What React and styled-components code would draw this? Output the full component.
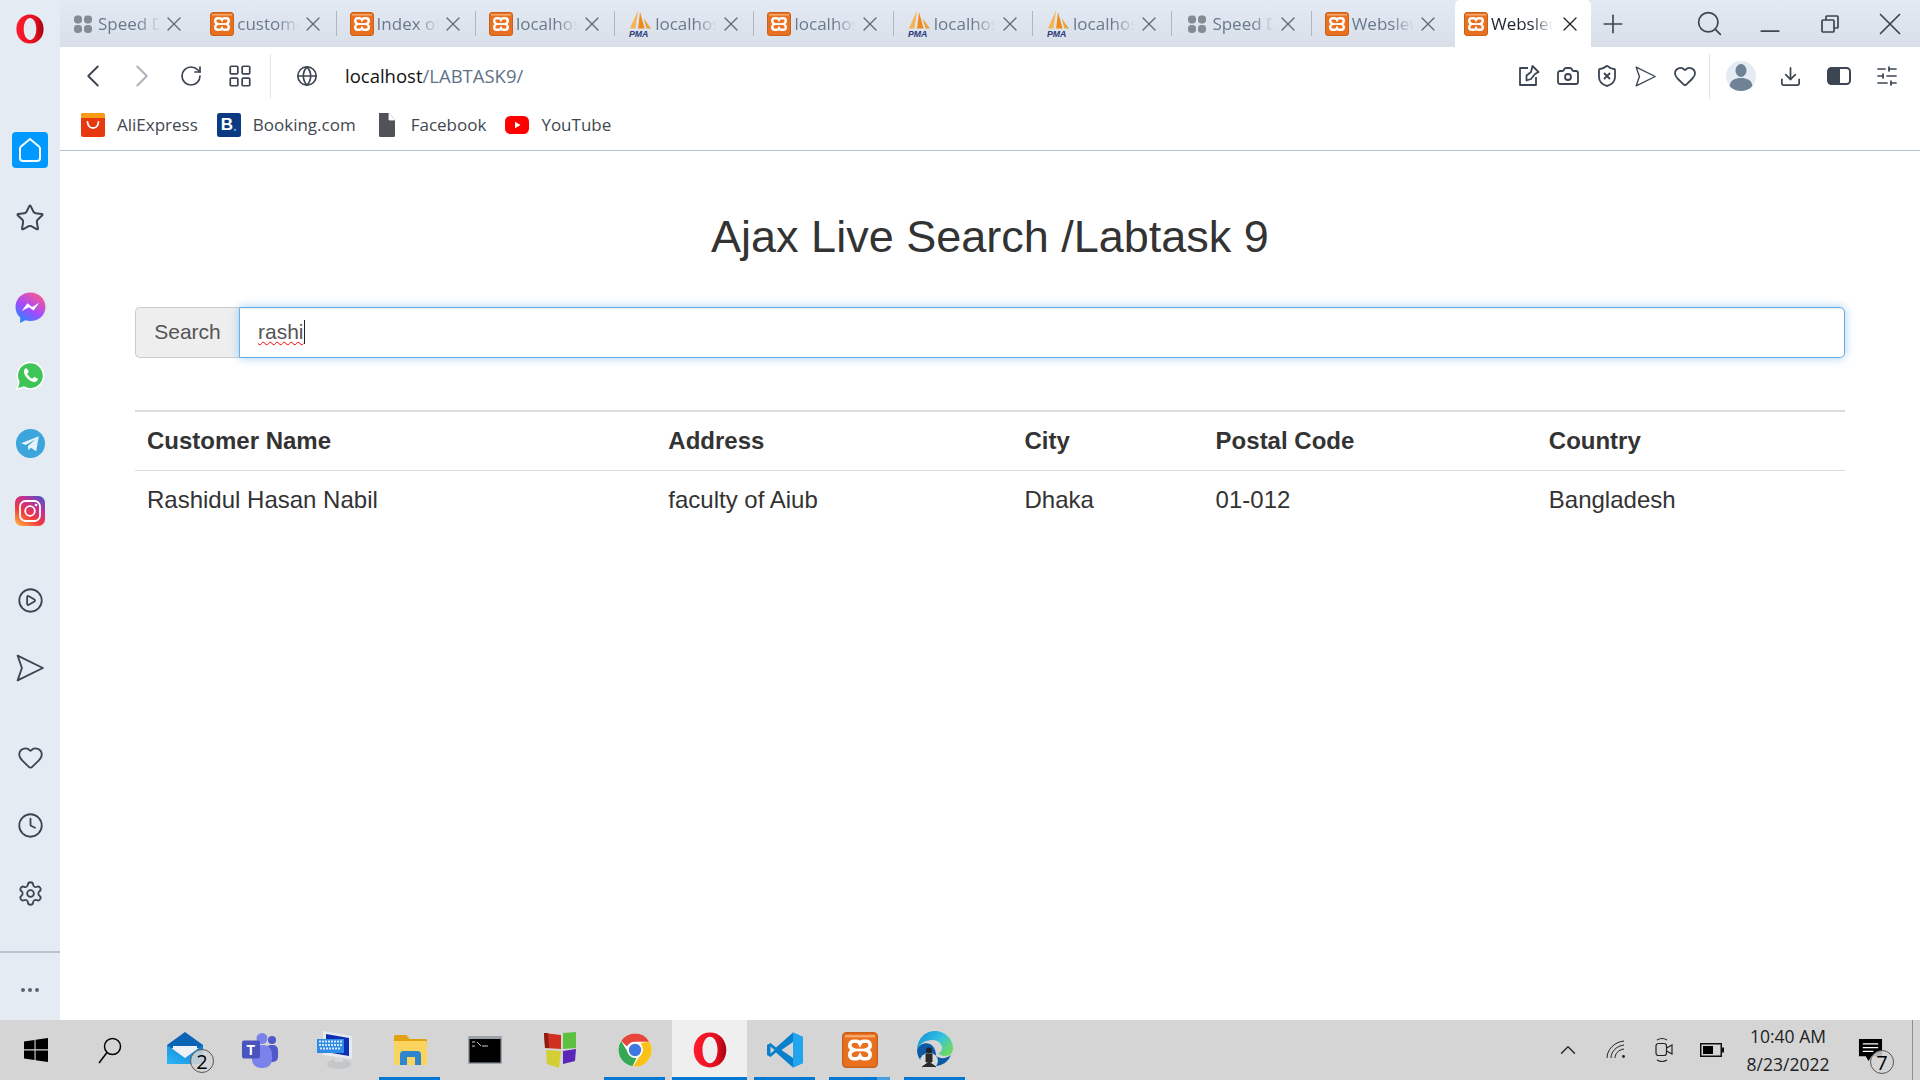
import React from 'react';
import styled, { createGlobalStyle } from 'styled-components';
import {
  ChevronLeft,
  ChevronRight,
  RotateCw,
  LayoutGrid,
  Globe,
  Camera,
  ShieldX,
  Heart,
  Download,
  SlidersHorizontal,
  X,
  Plus,
  Search as SearchIcon,
  Minus,
  Star,
  CirclePlay,
  Clock,
  Settings,
  Ellipsis,
  ChevronUp,
} from 'lucide-react';

const GlobalStyle = createGlobalStyle`
  html, body {
    margin: 0;
    padding: 0;
    background: #fff;
    overflow: hidden;
  }
  * {
    box-sizing: border-box;
  }
`;

const INK = '#3b4652';

const tabs = [
  { id: 1, icon: 'speed', title: 'Speed Dial' },
  { id: 2, icon: 'xampp', title: 'customers' },
  { id: 3, icon: 'xampp', title: 'Index of /' },
  { id: 4, icon: 'xampp', title: 'localhost/' },
  { id: 5, icon: 'pma', title: 'localhost/' },
  { id: 6, icon: 'xampp', title: 'localhost/' },
  { id: 7, icon: 'pma', title: 'localhost/' },
  { id: 8, icon: 'pma', title: 'localhost/' },
  { id: 9, icon: 'speed', title: 'Speed Dial' },
  { id: 10, icon: 'xampp', title: 'Websleuth' },
  { id: 11, icon: 'xampp', title: 'Websleuth', active: true },
];

const customers = [
  {
    name: 'Rashidul Hasan Nabil',
    address: 'faculty of Aiub',
    city: 'Dhaka',
    postal: '01-012',
    country: 'Bangladesh',
  },
];

/* ---------- drawn icons ---------- */

const XamppIcon = ({ size = 24 }) => (
  <svg width={size} height={size} viewBox="0 0 24 24">
    <rect x="0.500" y="0.500" width="23" height="23" rx="2.500" fill="#e8701f" stroke="#c9601c" strokeWidth="1" />
    <rect x="2" y="2" width="20" height="1.600" fill="#f6a56b" />
    <path
      d="M7.600 6.200h2c1.300 0 2 .8 2.400 1.600.4-.8 1.100-1.600 2.400-1.600h2c1.600 0 2.400 1.300 2.400 2.800 0 1.500-1.100 2.400-2.600 3 1.500.6 2.600 1.500 2.600 3 0 1.500-.8 2.800-2.400 2.800h-2c-1.300 0-2-.8-2.400-1.600-.4.8-1.100 1.600-2.400 1.600h-2c-1.600 0-2.400-1.300-2.400-2.800 0-1.500 1.100-2.400 2.600-3-1.500-.6-2.600-1.500-2.600-3C5.200 7.500 6 6.200 7.600 6.200z"
      fill="none"
      stroke="#fff"
      strokeWidth="2.400"
    />
    <path d="M8 12h8" stroke="#fff" strokeWidth="1.800" />
  </svg>
);

const PmaIcon = () => (
  <svg width="26" height="30" viewBox="0 0 26 30">
    <path d="M11 0 L8 20 H2 Z" fill="#f5b455" />
    <path d="M13 2 L11 20 H18 Z" fill="#f08a1d" />
    <path d="M17 9 L20 20 H25 Z" fill="#e8a33c" />
    <text x="1" y="29" fontFamily="Liberation Sans, sans-serif" fontSize="9.500" fontWeight="700" fontStyle="italic" fill="#2a3a7a">
      PMA
    </text>
  </svg>
);

const SpeedDialIcon = () => (
  <svg width="24" height="24" viewBox="0 0 24 24" fill="#858b92">
    <rect x="3" y="3.500" width="8" height="8" rx="3.400" />
    <rect x="13" y="3.500" width="8" height="8" rx="3.400" />
    <rect x="3" y="13" width="8" height="8" rx="3.400" />
    <rect x="13" y="13" width="8" height="8" rx="3.400" />
  </svg>
);

const OperaLogo = ({ size = 30, id = 'operaRed' }) => (
  <svg width={size} height={size} viewBox="0 0 32 32">
    <defs>
      <linearGradient id={id} x1="0" y1="0" x2="1" y2="0">
        <stop offset="0" stopColor="#ff1b2d" />
        <stop offset="0.700" stopColor="#e0101f" />
        <stop offset="1" stopColor="#a70014" />
      </linearGradient>
    </defs>
    <path
      fillRule="evenodd"
      d="M16 .5C7.300.500 1.500 7.400 1.500 16S7.300 31.500 16 31.500 30.500 24.600 30.500 16 24.700.500 16 .500zm0 3.800c4 0 6.700 5.400 6.700 11.700S20 27.700 16 27.700 9.300 22.300 9.300 16 12 4.300 16 4.300z"
      fill={`url(#${id})`}
    />
  </svg>
);

const HomeGlyph = () => (
  <svg width="24" height="26" viewBox="0 0 24 26" fill="none" stroke="#fff" strokeWidth="2" strokeLinejoin="round">
    <path d="M12 2 L21 9.500 Q22 10.500 22 12 V21 Q22 24 19 24 H5 Q2 24 2 21 V12 Q2 10.500 3 9.500 Z" />
  </svg>
);

const SendGlyph = ({ size = 28, stroke = INK }) => (
  <svg width={size} height={size} viewBox="0 0 26 26" fill="none" stroke={stroke} strokeWidth="1.700" strokeLinejoin="round">
    <path d="M1.500 1.500 L25 13 L1.500 24.500 L5.500 13 Z" />
  </svg>
);

const Messenger = () => (
  <svg width="31" height="31" viewBox="0 0 30 30">
    <defs>
      <linearGradient id="msgGrad" x1="0.200" y1="1" x2="0.800" y2="0">
        <stop offset="0" stopColor="#1e8bff" />
        <stop offset="0.450" stopColor="#a24bff" />
        <stop offset="1" stopColor="#ff5c87" />
      </linearGradient>
    </defs>
    <path d="M15 0.500C6.800.500.500 6.500.500 14.400c0 4.100 1.700 7.700 4.500 10.200V30l4.900-2.700c1.600.5 3.300.7 5.100.7 8.200 0 14.500-6 14.500-13.600S23.200.500 15 .500z" fill="url(#msgGrad)" />
    <path d="M6.500 18.500 L12 11 L16.500 14.500 L23.500 10.500 L18 18 L13.500 14.700 Z" fill="#fff" />
  </svg>
);

const Whatsapp = () => (
  <svg width="31" height="31" viewBox="0 0 30 30">
    <path d="M1 29 L3 21.500 A13.500 13.500 0 1 1 8.500 27 Z" fill="#fff" />
    <path d="M3 27 L4.500 21.200 A12 12 0 1 1 8.800 25.500 Z" fill="#3ec457" />
    <path d="M10.500 8c-1 .4-2 1.700-1.800 3.500.3 2.800 2.300 5.600 4.500 7.400 2 1.600 4.400 2.600 6.200 2.300 1.500-.3 2.700-1.500 2.800-2.800 0-.4-3-2.100-3.500-2-.6.100-1.200 1.600-1.800 1.600-1.500-.3-4.500-3-5-4.800-.1-.5 1.300-1.300 1.300-1.900 0-.6-1.300-3.300-2.700-3.300z" fill="#fff" />
  </svg>
);

const Telegram = () => (
  <svg width="29" height="29" viewBox="0 0 28 28">
    <circle cx="14" cy="14" r="14" fill="#3ba5dc" />
    <path d="M5 13.800 L22 7 L19.500 21.500 L14.500 18 L12 20.500 L11.500 16.500 L19 9.800 L9.500 15.500 Z" fill="#e6f3fa" />
  </svg>
);

const Instagram = () => (
  <svg width="30" height="30" viewBox="0 0 30 30">
    <defs>
      <linearGradient id="igGrad" x1="0.100" y1="1" x2="0.800" y2="0">
        <stop offset="0" stopColor="#fdb03d" />
        <stop offset="0.400" stopColor="#f0373f" />
        <stop offset="0.700" stopColor="#c5308f" />
        <stop offset="1" stopColor="#5b4fc4" />
      </linearGradient>
    </defs>
    <rect width="30" height="30" rx="6.500" fill="url(#igGrad)" />
    <rect x="5" y="5" width="20" height="20" rx="5.500" fill="none" stroke="#fff" strokeWidth="1.800" />
    <circle cx="15" cy="15" r="4.800" fill="none" stroke="#fff" strokeWidth="1.800" />
    <circle cx="21" cy="9" r="1.300" fill="#fff" />
  </svg>
);

const AliExpress = () => (
  <svg width="24" height="24" viewBox="0 0 24 24">
    <rect width="24" height="24" rx="2.500" fill="#e8380f" />
    <path d="M0 2.500A2.500 2.500 0 0 1 2.500 0h19A2.500 2.500 0 0 1 24 2.500V5H0z" fill="#f79a14" />
    <path d="M6.500 9c.5 4 2.500 6 5.500 6s5-2 5.500-6" fill="none" stroke="#fff" strokeWidth="1.800" strokeLinecap="round" />
  </svg>
);

const BookingMark = styled.span`
  display: flex;
  align-items: center;
  justify-content: center;
  width: 24px;
  height: 24px;
  border-radius: 2.500px;
  background: #0b3a82;
  color: #fff;
  font: 700 17px 'Liberation Sans', sans-serif;
  i {
    font-style: normal;
    color: #4ea6e6;
    font-size: 14px;
    margin-top: 3px;
  }
`;

const DocIcon = () => (
  <svg width="24" height="24" viewBox="0 0 24 24">
    <path d="M4 0h10l6 7v15.500a1.500 1.500 0 0 1-1.500 1.500h-13A1.500 1.500 0 0 1 4 22.500z" fill="#4f5357" />
    <path d="M14 0v7h6" fill="#fff" stroke="#fff" strokeWidth="0.800" />
  </svg>
);

const YouTubeIcon = () => (
  <svg width="24" height="24" viewBox="0 0 24 24">
    <rect y="3" width="24" height="18" rx="5.500" fill="#f00" />
    <path d="M10 8.800 L15.500 12 L10 15.200 Z" fill="#fff" />
  </svg>
);

const PinIcon = () => (
  <svg width="24" height="24" viewBox="0 0 24 24" fill="none" stroke={INK} strokeWidth="1.800" strokeLinejoin="round">
    <path d="M11 4 H3 V21 H19 V13" />
    <path d="M15.500 2 L21.500 8 L18 10 L14 15 L9.500 16.500 L9.500 11.500 L14 8 Z" />
  </svg>
);

const Avatar = () => (
  <svg width="30" height="30" viewBox="0 0 30 30">
    <circle cx="15" cy="15" r="15" fill="#e4ebf3" />
    <ellipse cx="15" cy="9.500" rx="5.500" ry="6.500" fill="#6f8296" />
    <path d="M3.500 25c1-6 5.500-8 11.500-8s10.500 2 11.500 8c-3 3.500-7 5-11.500 5s-8.500-1.500-11.500-5z" fill="#6f8296" />
  </svg>
);

const ToggleIcon = () => (
  <svg width="24" height="20" viewBox="0 0 24 20">
    <rect x="1" y="2" width="22" height="16" rx="3.500" fill="#fff" stroke={INK} strokeWidth="2" />
    <path d="M4.500 2H13V18H4.500A3.500 3.500 0 0 1 1 14.500v-9A3.500 3.500 0 0 1 4.500 2z" fill={INK} />
  </svg>
);

const RestoreIcon = () => (
  <svg width="18" height="18" viewBox="0 0 18 18" fill="none" stroke={INK} strokeWidth="1.700">
    <rect x="1" y="5" width="12" height="12" rx="1" />
    <path d="M5 5V1.800A.8.8 0 0 1 5.800 1H16.200a.8.8 0 0 1 .8.800V12a1 1 0 0 1-1 1h-3" />
  </svg>
);

const WindowsLogo = () => (
  <svg width="24" height="24" viewBox="0 0 24 24" fill="#000">
    <path d="M0 3.400 L10.500 2 V11.300 H0 Z" />
    <path d="M11.600 1.800 L24 0 V11.300 H11.600 Z" />
    <path d="M0 12.500 H10.500 V22 L0 20.600 Z" />
    <path d="M11.600 12.500 H24 V24 L11.600 22.200 Z" />
  </svg>
);

const TaskSearch = () => (
  <svg width="26" height="28" viewBox="0 0 26 28" fill="none" stroke="#000" strokeWidth="1.500">
    <circle cx="15.500" cy="10.500" r="8" />
    <path d="M10 16.500 L2 27" />
  </svg>
);

const MailIcon = () => (
  <svg width="36" height="36" viewBox="0 0 36 36">
    <defs>
      <linearGradient id="mailFront" x1="0" y1="1" x2="1" y2="0">
        <stop offset="0" stopColor="#2cb7f2" />
        <stop offset="1" stopColor="#0a78d4" />
      </linearGradient>
    </defs>
    <path d="M0 13 L18 0 L36 13 V16 H0 Z" fill="#0b63b5" />
    <path d="M6 14 H30 V22 L18 29 L6 22 Z" fill="#eef2f6" />
    <path d="M0 13 L18 26 L36 13 V32 H0 Z" fill="url(#mailFront)" />
  </svg>
);

const TeamsIcon = () => (
  <svg width="36" height="36" viewBox="0 0 36 36">
    <circle cx="30" cy="8" r="4" fill="#5059c9" />
    <rect x="24" y="13" width="12" height="17" rx="5" fill="#5059c9" />
    <circle cx="20" cy="6.500" r="5.500" fill="#7b83eb" />
    <rect x="10" y="13" width="20" height="23" rx="8.500" fill="#7b83eb" />
    <rect x="0" y="8.500" width="18" height="18" rx="2" fill="#4b53bc" />
    <text x="4.500" y="23" fontFamily="Liberation Sans, sans-serif" fontSize="14" fontWeight="700" fill="#fff">T</text>
  </svg>
);

const RemoteIcon = () => (
  <svg width="36" height="38" viewBox="0 0 36 38">
    <ellipse cx="22" cy="33" rx="12" ry="5" fill="#c4c7c9" />
    <rect x="18" y="26" width="8" height="5" fill="#d8d8d8" />
    <path d="M6 0 L35 5 V28 L6 24 Z" fill="#e6e9ee" />
    <path d="M9 3 L32 7 V25 L9 21 Z" fill="#0c2fb4" />
    <path d="M0 8 H27 V22 H0 Z" fill="#2d8be6" />
    <path d="M2 10.500 H25 M2 14 H25 M3 17.500 H24" stroke="#d3e9fb" strokeWidth="2" strokeDasharray="2 1" />
  </svg>
);

const FolderIcon = () => (
  <svg width="34" height="34" viewBox="0 0 34 34">
    <path d="M1 3.500A1.500 1.500 0 0 1 2.500 2h11l3 4H32.500A1.500 1.500 0 0 1 34 7.500V12H1z" fill="#e2a210" />
    <path d="M1 8 H32.500A1.500 1.500 0 0 1 34 9.500V30.500A1.500 1.500 0 0 1 32.500 32H2.500A1.500 1.500 0 0 1 1 30.500z" fill="#fbd35f" />
    <path d="M7 32 V21.500A3.500 3.500 0 0 1 10.500 18h14a3.500 3.500 0 0 1 3.500 3.500V32h-6V24h-8v8z" fill="#2f86cc" />
  </svg>
);

const CmdIcon = () => (
  <svg width="34" height="28" viewBox="0 0 34 28">
    <rect width="34" height="28" rx="1" fill="#9ba1a8" />
    <rect x="1.500" y="3" width="31" height="23.500" fill="#000" />
    <path d="M4 6h3M4 10h3M9 6l4 4M14 10h6" stroke="#c9c9c9" strokeWidth="1" />
  </svg>
);

const CodeBlocksIcon = () => (
  <svg width="34" height="36" viewBox="0 0 34 36">
    <path d="M1 1 L18 3 V17 L2 16 Z" fill="#d0301f" />
    <path d="M20 1 L33 0 V16 L20 17 Z" fill="#5cc13f" />
    <path d="M3 18 L18 19 L16 36 L4 32 Z" fill="#d2ce34" />
    <path d="M20 19 L33 17 L32 29 L20 32 Z" fill="#5a26b8" />
    <path d="M1 1 L5 1 L6 16 L2 16 Z" fill="#8e1d12" />
  </svg>
);

const ChromeIcon = () => (
  <svg width="34" height="34" viewBox="0 0 34 34">
    <circle cx="17" cy="17" r="16.500" fill="#fff" />
    <path d="M17 .5A16.500 16.500 0 0 1 31.300 8.750L17 8.750Q11.500 8.750 9 13.500L3.200 8A16.500 16.500 0 0 1 17 .5z" fill="#e8453c" />
    <path d="M3.200 8L10 19.500Q12.500 25 18.500 25L14.500 33.300A16.500 16.500 0 0 1 3.200 8z" fill="#34a853" />
    <path d="M31.300 8.750A16.500 16.500 0 0 1 15 33.400L23.800 20Q26 15 22.500 10z" fill="#fbc116" />
    <circle cx="17" cy="17" r="7.800" fill="#fff" />
    <circle cx="17" cy="17" r="6.200" fill="#3f78e0" />
  </svg>
);

const VsCodeIcon = () => (
  <svg width="36" height="36" viewBox="0 0 36 36">
    <path d="M26 0.500 L36 5 V31 L26 35.500 L9 20.500 L3.500 25 L0 23 V13 L3.500 11 L9 15.500Z" fill="#0a7fcb" />
    <path d="M26 0.500 L36 5 V31 L26 35.500 Z" fill="#22a5ef" />
    <path d="M26 10 V26 L14.500 18 Z" fill="#d5d5d5" />
    <path d="M3.500 14.500 V21.500 L7.500 18 Z" fill="#d5d5d5" />
  </svg>
);

const EdgeIcon = () => (
  <svg width="36" height="38" viewBox="0 0 36 38">
    <defs>
      <linearGradient id="edgeTop" x1="0" y1="0" x2="1" y2="0.600">
        <stop offset="0" stopColor="#0c8bd3" />
        <stop offset="0.600" stopColor="#35c1e0" />
        <stop offset="1" stopColor="#6bd86a" />
      </linearGradient>
    </defs>
    <path d="M0 19C0 7 9 0 18 0c10 0 18 8 18 17 0 5-3 8-8 8-4 0-6-2-6-3 2-1 3-3 3-5 0-4-4-8-9-8C8 9 2 13 0 19z" fill="url(#edgeTop)" />
    <path d="M0 19C2 13 8 11 13 13c4 2 6 7 6 12 4 3 10 3 15-1-3 7-9 11-16 11C8 35 0 29 0 19z" fill="#0c59a4" />
    <ellipse cx="12" cy="30" rx="9" ry="8" fill="#d9dadb" />
    <circle cx="12" cy="19.500" r="3" fill="#222" />
    <path d="M9 23h6v8H9zM5 36l7-5 7 5" fill="#2a2a2a" stroke="#2a2a2a" strokeWidth="1" />
  </svg>
);

const WifiIcon = () => (
  <svg width="20" height="20" viewBox="0 0 20 20" fill="none" stroke="#222" strokeWidth="1">
    <path d="M1 18C1 10 8 2 18 1" />
    <path d="M5 18C5 12 10 6 18 5" />
    <path d="M9 18C9 14 12 10 18 9" />
    <circle cx="17.500" cy="16.500" r="1.400" fill="#222" stroke="none" />
  </svg>
);

const MeetIcon = () => (
  <svg width="18" height="26" viewBox="0 0 18 26" fill="none" stroke="#222" strokeWidth="1.200">
    <rect x="1" y="6.500" width="10.500" height="12" rx="2.500" />
    <path d="M11.500 11 L17 8 V17 L11.500 14" />
    <path d="M2 3 Q7 0 12 3" />
    <path d="M2 23 Q7 26 12 23" />
  </svg>
);

const BatteryIcon = () => (
  <svg width="24" height="14" viewBox="0 0 24 14">
    <rect x="0.750" y="0.750" width="20.500" height="12.500" fill="none" stroke="#111" strokeWidth="1.500" />
    <rect x="3" y="3" width="10" height="8" fill="#000" />
    <rect x="22" y="4.500" width="2" height="5" fill="#111" />
  </svg>
);

const NoteIcon = () => (
  <svg width="25" height="25" viewBox="0 0 26 26">
    <path d="M1 1 H25 V19 H14 L11 24 L8 19 H1 Z" fill="#000" />
    <path d="M5 6 H21 M5 10 H21 M5 14 H16" stroke="#fff" strokeWidth="1.300" />
  </svg>
);

/* ---------- window frame ---------- */

const Screen = styled.div`
  display: flex;
  flex-direction: column;
  width: 1920px;
  height: 1080px;
  font-family: 'Liberation Sans', Arial, sans-serif;
`;

const Main = styled.div`
  display: flex;
  flex: 1;
  min-height: 0;
`;

const Sidebar = styled.aside`
  display: flex;
  flex-direction: column;
  width: 60px;
  flex-shrink: 0;
  background: #e4ebf3;
`;

const SideLogo = styled.div`
  display: flex;
  justify-content: center;
  height: 116px;
  padding-top: 14px;
`;

const SideGroup = styled.div`
  display: flex;
  flex-direction: column;
  margin-bottom: 21px;
`;

const SideItem = styled.div`
  display: flex;
  align-items: center;
  justify-content: center;
  height: 68px;
  color: ${INK};
`;

const HomeTile = styled.div`
  display: flex;
  align-items: center;
  justify-content: center;
  width: 36px;
  height: 36px;
  border-radius: 4px;
  background: #0099ff;
`;

const SideFooter = styled.div`
  display: flex;
  align-items: center;
  justify-content: center;
  flex: 1;
  margin-top: 3px;
  padding-top: 7px;
  border-top: 2px solid #b5c2cf;
  color: #5a6570;
`;

const Browser = styled.div`
  display: flex;
  flex-direction: column;
  flex: 1;
  min-width: 0;
  background: #fff;
`;

/* tab strip */

const TabStrip = styled.div`
  display: flex;
  align-items: stretch;
  height: 47px;
  padding-left: 2px;
  background: linear-gradient(#e3eaf3, #d8dfe8);
  color: ${INK};
`;

const Tab = styled.div`
  position: relative;
  display: flex;
  align-items: center;
  flex-shrink: 0;
  width: ${(p) => (p.$active ? '136px' : '135.300px')};
  margin-right: ${(p) => (p.$active ? '0' : '4px')};
  padding-left: 9px;
  border-radius: 5px 5px 0 0;
  background: ${(p) => (p.$active ? '#fff' : 'transparent')};
  &::after {
    content: '';
    display: ${(p) => (p.$divider ? 'block' : 'none')};
    position: absolute;
    right: 0;
    top: 11px;
    height: 25px;
    border-right: 1px solid #aeb8c3;
  }
`;

const TabIconSlot = styled.span`
  display: flex;
  align-items: center;
  justify-content: center;
  width: 24px;
  height: 30px;
  margin-right: 3px;
  flex-shrink: 0;
`;

const TabTitle = styled.span`
  width: 62px;
  flex-shrink: 0;
  overflow: hidden;
  white-space: nowrap;
  font: 17px 'Open Sans', sans-serif;
  color: ${(p) => (p.$active ? '#1c2630' : '#6a7a8c')};
  -webkit-mask-image: linear-gradient(to right, #000 65%, transparent 100%);
  mask-image: linear-gradient(to right, #000 65%, transparent 100%);
`;

const TabClose = styled.span`
  display: flex;
  margin-left: ${(p) => (p.$active ? '5px' : '2px')};
  color: ${(p) => (p.$active ? '#222' : '#5d6975')};
`;

const StripButton = styled.span`
  display: flex;
  align-items: center;
  justify-content: center;
  width: ${(p) => p.$w}px;
  flex-shrink: 0;
`;

/* toolbar */

const Toolbar = styled.div`
  display: flex;
  align-items: center;
  height: 58px;
  padding-left: 8px;
  color: ${INK};
`;

const NavButton = styled.span`
  display: flex;
  align-items: center;
  justify-content: center;
  width: ${(p) => p.$w || 49}px;
  flex-shrink: 0;
  color: ${(p) => (p.$off ? '#aab2ba' : INK)};
`;

const ToolDivider = styled.span`
  width: 1px;
  height: 45px;
  flex-shrink: 0;
  margin: 0 ${(p) => p.$right || 0}px 0 ${(p) => p.$left || 0}px;
  background: #e2e6ea;
`;

const AddressText = styled.div`
  flex: 1;
  margin: 0 0 2px 27px;
  font: 18.500px 'Open Sans', sans-serif;
  color: #111;
  span {
    color: #5f7286;
  }
`;

const ToolRight = styled.div`
  display: flex;
  align-items: center;
`;

/* bookmarks */

const BookmarkBar = styled.div`
  display: flex;
  align-items: center;
  gap: 19px;
  height: 46px;
  padding: 0 0 6px 21px;
  border-bottom: 1px solid #b9c3cd;
`;

const Bookmark = styled.div`
  display: flex;
  align-items: center;
  gap: 12px;
  font: 17px 'Open Sans', sans-serif;
  color: #3f4850;
`;

/* ---------- page ---------- */

const Page = styled.main`
  flex: 1;
  padding: 0 75px;
  color: #333;
`;

const Title = styled.h2`
  margin: 61px 0 0;
  height: 50px;
  line-height: 50px;
  text-align: center;
  font-size: 45px;
  font-weight: 400;
`;

const SearchGroup = styled.div`
  display: flex;
  height: 51px;
  margin-top: 45px;
  font-size: 21px;
`;

const SearchAddon = styled.div`
  display: flex;
  align-items: center;
  justify-content: center;
  width: 104px;
  flex-shrink: 0;
  padding-bottom: 1px;
  background: #eee;
  border: 1px solid #ccc;
  border-right: 0;
  border-radius: 5px 0 0 5px;
  color: #555;
`;

const SearchInput = styled.div`
  display: flex;
  align-items: center;
  flex: 1;
  padding: 0 0 1px 18px;
  background: #fff;
  border: 1.500px solid #66afe9;
  border-radius: 0 5px 5px 0;
  box-shadow: inset 0 1px 1px rgba(0, 0, 0, 0.075), 0 0 10px rgba(102, 175, 233, 0.6);
  color: #555;
`;

const Misspelled = styled.span`
  text-decoration: underline wavy #f00 1.200px;
  text-underline-offset: 2px;
`;

const Caret = styled.span`
  width: 1px;
  height: 24px;
  background: #222;
`;

const ResultTable = styled.table`
  width: 100%;
  margin-top: 52px;
  border-collapse: collapse;
  table-layout: fixed;
  font-size: 24px;
  color: #333;
`;

const Th = styled.th`
  width: ${(p) => p.$w}px;
  height: 59px;
  padding: 0 12px;
  text-align: left;
  font-weight: 700;
  border-top: 2px solid #ddd;
  border-bottom: 1px solid #ddd;
`;

const Td = styled.td`
  height: 60px;
  padding: 0 12px;
`;

/* ---------- taskbar ---------- */

const Taskbar = styled.footer`
  display: flex;
  align-items: stretch;
  height: 60px;
  flex-shrink: 0;
  background: #d5d5d5;
`;

const StartSlot = styled.div`
  display: flex;
  align-items: center;
  justify-content: center;
  width: ${(p) => p.$w}px;
  flex-shrink: 0;
`;

const AppSlot = styled.div`
  position: relative;
  display: flex;
  align-items: center;
  justify-content: center;
  width: 75px;
  flex-shrink: 0;
  background: ${(p) => (p.$active ? '#efefef' : 'transparent')};
  &::after {
    content: '';
    display: ${(p) => (p.$running ? 'block' : 'none')};
    position: absolute;
    bottom: 0;
    left: ${(p) => (p.$active ? '0' : '7px')};
    right: ${(p) => (p.$active ? '0' : '7px')};
    height: 3px;
    background: ${(p) =>
      p.$split ? 'linear-gradient(to right, #0078d4 79%, #4a9fe0 79%)' : '#0078d4'};
  }
`;

const CountBadge = styled.span`
  position: absolute;
  right: ${(p) => p.$right}px;
  bottom: ${(p) => p.$bottom}px;
  display: flex;
  align-items: center;
  justify-content: center;
  width: 24px;
  height: 24px;
  border: 1px solid #555;
  border-radius: 50%;
  background: rgba(213, 213, 213, 0.85);
  font: 20px 'Open Sans', sans-serif;
  color: #000;
`;

const Tray = styled.div`
  display: flex;
  align-items: center;
  margin-left: auto;
`;

const TraySlot = styled.div`
  display: flex;
  align-items: center;
  justify-content: center;
  width: 48px;
  height: 100%;
`;

const ClockText = styled.div`
  width: 104px;
  text-align: center;
  font: 17.500px/28px 'Open Sans', sans-serif;
  color: #222;
`;

const NoteSlot = styled.div`
  position: relative;
  display: flex;
  align-items: center;
  justify-content: center;
  width: 62px;
  height: 100%;
  margin-left: 4px;
  padding-right: 10px;
`;

const ShowDesktop = styled.div`
  align-self: stretch;
  width: 8px;
  margin-left: 6px;
  border-left: 1px solid #8d8d8d;
`;

const tabIcon = (kind) => {
  if (kind === 'speed') return <SpeedDialIcon />;
  if (kind === 'pma') return <PmaIcon />;
  return <XamppIcon />;
};

const App = () => {
  const columns = [
    { label: 'Customer Name', key: 'name', w: 521 },
    { label: 'Address', key: 'address', w: 356 },
    { label: 'City', key: 'city', w: 191 },
    { label: 'Postal Code', key: 'postal', w: 333 },
    { label: 'Country', key: 'country', w: 308 },
  ];

  return (
    <Screen>
      <GlobalStyle />
      <Main>
        <Sidebar>
          <SideLogo>
            <OperaLogo />
          </SideLogo>
          <SideGroup>
            <SideItem>
              <HomeTile>
                <HomeGlyph />
              </HomeTile>
            </SideItem>
            <SideItem>
              <Star size={30} strokeWidth={1.6} />
            </SideItem>
          </SideGroup>
          <SideGroup>
            <SideItem>
              <Messenger />
            </SideItem>
            <SideItem>
              <Whatsapp />
            </SideItem>
            <SideItem>
              <Telegram />
            </SideItem>
            <SideItem>
              <Instagram />
            </SideItem>
          </SideGroup>
          <SideGroup>
            <SideItem>
              <CirclePlay size={27} strokeWidth={1.6} />
            </SideItem>
            <SideItem>
              <SendGlyph />
            </SideItem>
          </SideGroup>
          <SideGroup>
            <SideItem>
              <Heart size={27} strokeWidth={1.6} />
            </SideItem>
            <SideItem>
              <Clock size={27} strokeWidth={1.6} />
            </SideItem>
            <SideItem>
              <Settings size={27} strokeWidth={1.6} />
            </SideItem>
          </SideGroup>
          <SideFooter>
            <Ellipsis size={24} />
          </SideFooter>
        </Sidebar>

        <Browser>
          <TabStrip>
            {tabs.map((t, i) => (
              <Tab key={t.id} $active={t.active} $divider={!t.active && i > 0 && i < tabs.length - 2}>
                <TabIconSlot>{tabIcon(t.icon)}</TabIconSlot>
                <TabTitle $active={t.active}>{t.title}</TabTitle>
                <TabClose $active={t.active}>
                  <X size={24} strokeWidth={1.3} />
                </TabClose>
              </Tab>
            ))}
            <StripButton $w={44}>
              <Plus size={30} strokeWidth={1.3} />
            </StripButton>
            <StripButton $w={40} />
            <StripButton $w={70}>
              <SearchIcon size={29} strokeWidth={1.4} />
            </StripButton>
            <StripButton $w={50}>
              <Minus size={30} strokeWidth={1.4} style={{ marginTop: 14 }} />
            </StripButton>
            <StripButton $w={70}>
              <RestoreIcon />
            </StripButton>
            <StripButton $w={50}>
              <X size={38} strokeWidth={1.1} />
            </StripButton>
          </TabStrip>

          <Toolbar>
            <NavButton>
              <ChevronLeft size={38} strokeWidth={1.2} />
            </NavButton>
            <NavButton $off>
              <ChevronRight size={38} strokeWidth={1.2} />
            </NavButton>
            <NavButton>
              <RotateCw size={24} strokeWidth={1.7} />
            </NavButton>
            <NavButton>
              <LayoutGrid size={26} strokeWidth={1.6} />
            </NavButton>
            <ToolDivider $left={6} $right={25} />
            <Globe size={22} strokeWidth={1.8} />
            <AddressText>
              localhost<span>/LABTASK9/</span>
            </AddressText>
            <ToolRight>
              <NavButton $w={39}>
                <PinIcon />
              </NavButton>
              <NavButton $w={39}>
                <Camera size={24} strokeWidth={1.8} />
              </NavButton>
              <NavButton $w={39}>
                <ShieldX size={24} strokeWidth={1.8} />
              </NavButton>
              <NavButton $w={39}>
                <SendGlyph size={21} />
              </NavButton>
              <NavButton $w={39}>
                <Heart size={24} strokeWidth={1.8} />
              </NavButton>
              <ToolDivider $left={5} $right={16} />
              <NavButton $w={30}>
                <Avatar />
              </NavButton>
              <NavButton $w={68}>
                <Download size={23} strokeWidth={1.8} />
              </NavButton>
              <NavButton $w={30}>
                <ToggleIcon />
              </NavButton>
              <NavButton $w={66}>
                <SlidersHorizontal size={24} strokeWidth={1.7} />
              </NavButton>
            </ToolRight>
          </Toolbar>

          <BookmarkBar>
            <Bookmark>
              <AliExpress />
              AliExpress
            </Bookmark>
            <Bookmark>
              <BookingMark>
                B<i>.</i>
              </BookingMark>
              Booking.com
            </Bookmark>
            <Bookmark>
              <DocIcon />
              Facebook
            </Bookmark>
            <Bookmark>
              <YouTubeIcon />
              YouTube
            </Bookmark>
          </BookmarkBar>

          <Page>
            <Title>Ajax Live Search /Labtask 9</Title>
            <SearchGroup>
              <SearchAddon>Search</SearchAddon>
              <SearchInput>
                <Misspelled>rashi</Misspelled>
                <Caret />
              </SearchInput>
            </SearchGroup>
            <ResultTable>
              <thead>
                <tr>
                  {columns.map((c) => (
                    <Th key={c.key} $w={c.w}>
                      {c.label}
                    </Th>
                  ))}
                </tr>
              </thead>
              <tbody>
                {customers.map((row) => (
                  <tr key={row.name}>
                    {columns.map((c) => (
                      <Td key={c.key}>{row[c.key]}</Td>
                    ))}
                  </tr>
                ))}
              </tbody>
            </ResultTable>
          </Page>
        </Browser>
      </Main>

      <Taskbar>
        <StartSlot $w={72}>
          <WindowsLogo />
        </StartSlot>
        <StartSlot $w={75}>
          <TaskSearch />
        </StartSlot>
        <AppSlot>
          <MailIcon />
          <CountBadge $right={8} $bottom={7}>
            2
          </CountBadge>
        </AppSlot>
        <AppSlot>
          <TeamsIcon />
        </AppSlot>
        <AppSlot>
          <RemoteIcon />
        </AppSlot>
        <AppSlot $running>
          <FolderIcon />
        </AppSlot>
        <AppSlot>
          <CmdIcon />
        </AppSlot>
        <AppSlot>
          <CodeBlocksIcon />
        </AppSlot>
        <AppSlot $running>
          <ChromeIcon />
        </AppSlot>
        <AppSlot $running $active>
          <OperaLogo size={36} id="operaRedTask" />
        </AppSlot>
        <AppSlot $running>
          <VsCodeIcon />
        </AppSlot>
        <AppSlot $running $split>
          <XamppIcon size={36} />
        </AppSlot>
        <AppSlot $running>
          <EdgeIcon />
        </AppSlot>
        <Tray>
          <TraySlot>
            <ChevronUp size={26} strokeWidth={1.2} color="#222" />
          </TraySlot>
          <TraySlot>
            <WifiIcon />
          </TraySlot>
          <TraySlot>
            <MeetIcon />
          </TraySlot>
          <TraySlot>
            <BatteryIcon />
          </TraySlot>
          <ClockText>
            10:40 AM
            <br />
            8/23/2022
          </ClockText>
          <NoteSlot>
            <NoteIcon />
            <CountBadge $right={12} $bottom={6}>
              7
            </CountBadge>
          </NoteSlot>
          <ShowDesktop />
        </Tray>
      </Taskbar>
    </Screen>
  );
};

export default App;
